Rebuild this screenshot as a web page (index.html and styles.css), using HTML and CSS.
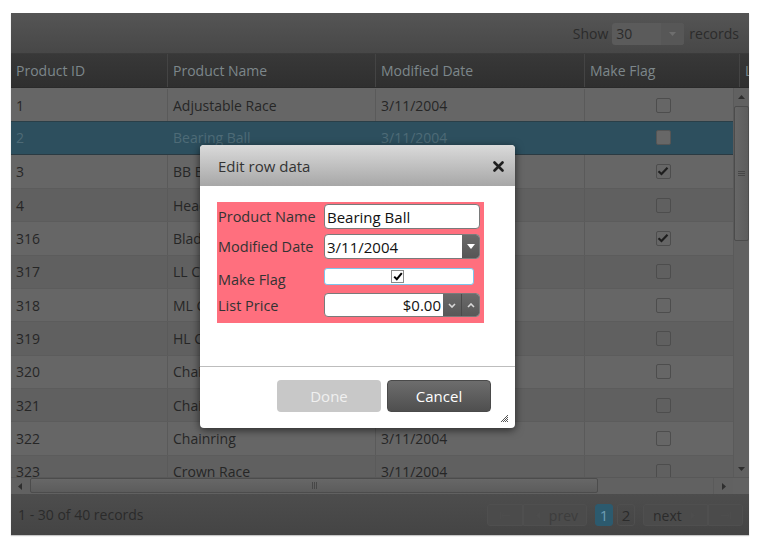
FILE: index.html
```html
<!DOCTYPE html>
<html>
<head>
<meta charset="utf-8">
<title>Grid edit</title>
<link rel="stylesheet" href="styles.css">
</head>
<body>
<div class="grid">
  <div class="toolbar">
    <span class="tb-text">Show</span>
    <span class="pagesize"><span class="ps-val">30</span><span class="ps-btn"><svg width="7" height="4" viewBox="0 0 7 4"><path d="M0 0H7L3.5 4Z" fill="#6e6e6e"/></svg></span></span>
    <span class="tb-text">records</span>
  </div>
  <div class="header">
    <div class="th">Product ID</div>
    <div class="th">Product Name</div>
    <div class="th">Modified Date</div>
    <div class="th">Make Flag</div>
    <div class="th">List Price</div>
  </div>
  <div class="content">
    <div class="rows">
      <div class="row"><div class="td">1</div><div class="td">Adjustable Race</div><div class="td">3/11/2004</div><div class="td cbc"><span class="chk"></span></div></div>
      <div class="row alt sel"><div class="td">2</div><div class="td">Bearing Ball</div><div class="td">3/11/2004</div><div class="td cbc"><span class="chk"></span></div></div>
      <div class="row"><div class="td">3</div><div class="td">BB Ball Bearing</div><div class="td">3/11/2004</div><div class="td cbc"><span class="chk on"><svg width="12" height="10" viewBox="0 0 12 10"><path d="M1.5 5.2L4.5 8L10.5 1.8" fill="none" stroke="#1e1e1e" stroke-width="2.2"/></svg></span></div></div>
      <div class="row alt"><div class="td">4</div><div class="td">Headset Ball Bearings</div><div class="td">3/11/2004</div><div class="td cbc"><span class="chk"></span></div></div>
      <div class="row"><div class="td">316</div><div class="td">Blade</div><div class="td">3/11/2004</div><div class="td cbc"><span class="chk on"><svg width="12" height="10" viewBox="0 0 12 10"><path d="M1.5 5.2L4.5 8L10.5 1.8" fill="none" stroke="#1e1e1e" stroke-width="2.2"/></svg></span></div></div>
      <div class="row alt"><div class="td">317</div><div class="td">LL Crankarm</div><div class="td">3/11/2004</div><div class="td cbc"><span class="chk"></span></div></div>
      <div class="row"><div class="td">318</div><div class="td">ML Crankarm</div><div class="td">3/11/2004</div><div class="td cbc"><span class="chk"></span></div></div>
      <div class="row alt"><div class="td">319</div><div class="td">HL Crankarm</div><div class="td">3/11/2004</div><div class="td cbc"><span class="chk"></span></div></div>
      <div class="row"><div class="td">320</div><div class="td">Chainring Bolts</div><div class="td">3/11/2004</div><div class="td cbc"><span class="chk"></span></div></div>
      <div class="row alt"><div class="td">321</div><div class="td">Chainring Nut</div><div class="td">3/11/2004</div><div class="td cbc"><span class="chk"></span></div></div>
      <div class="row"><div class="td">322</div><div class="td">Chainring</div><div class="td">3/11/2004</div><div class="td cbc"><span class="chk"></span></div></div>
      <div class="row alt"><div class="td">323</div><div class="td">Crown Race</div><div class="td">3/11/2004</div><div class="td cbc"><span class="chk"></span></div></div>
    </div>
    <div class="vscroll">
      <div class="arrow"><svg width="7" height="4" viewBox="0 0 7 4"><path d="M0 4H7L3.5 0Z" fill="#2e2e2e"/></svg></div>
      <div class="vthumb"><svg width="7" height="7" viewBox="0 0 7 7"><path d="M0 1.5H7M0 3.5H7M0 5.5H7" stroke="#474747" stroke-width="1"/></svg></div>
      <div class="vtrack"></div>
      <div class="arrow"><svg width="7" height="4" viewBox="0 0 7 4"><path d="M0 0H7L3.5 4Z" fill="#2e2e2e"/></svg></div>
    </div>
  </div>
  <div class="hscroll">
    <div class="harrow"><svg width="4" height="7" viewBox="0 0 4 7"><path d="M4 0V7L0 3.5Z" fill="#2e2e2e"/></svg></div>
    <div class="hthumb"><svg width="7" height="7" viewBox="0 0 7 7"><path d="M1.5 0V7M3.5 0V7M5.5 0V7" stroke="#474747" stroke-width="1"/></svg></div>
    <div class="htrack"></div>
    <div class="harrow right"><svg width="4" height="7" viewBox="0 0 4 7"><path d="M0 0V7L4 3.5Z" fill="#2e2e2e"/></svg></div>
    <div class="corner"></div>
  </div>
  <div class="footer">
    <span class="info">1 - 30 of 40 records</span>
    <div class="pager">
      <span class="pbtn first"><svg width="10" height="7" viewBox="0 0 10 7"><path d="M0.5 0V7M1.5 3.5H10M1.5 3.5L4.5 1M1.5 3.5L4.5 6" stroke="#4d4d4d" stroke-width="1" fill="none"/></svg></span>
      <span class="pbtn prev"><svg width="4" height="7" viewBox="0 0 4 7"><path d="M4 0V7L0 3.5Z" fill="#4d4d4d"/></svg><span>prev</span></span>
      <span class="page cur">1</span>
      <span class="page">2</span>
      <span class="pbtn next"><span>next</span><svg width="4" height="7" viewBox="0 0 4 7"><path d="M0 0V7L4 3.5Z" fill="#4d4d4d"/></svg></span>
      <span class="pbtn last"><svg width="10" height="7" viewBox="0 0 10 7"><path d="M9.5 0V7M0 3.5H8.5M8.5 3.5L5.5 1M8.5 3.5L5.5 6" stroke="#4d4d4d" stroke-width="1" fill="none"/></svg></span>
    </div>
  </div>
</div>

<div class="dialog">
  <div class="dlg-title">
    <span>Edit row data</span>
    <svg class="close" width="11" height="11" viewBox="0 0 11 11"><path d="M1.5 1.5L9.5 9.5M9.5 1.5L1.5 9.5" stroke="#1f1f1f" stroke-width="2.6" stroke-linecap="round"/></svg>
  </div>
  <div class="dlg-body">
    <div class="form">
      <div class="frow r1"><label>Product Name</label><div class="field input"><span>Bearing Ball</span></div></div>
      <div class="frow r2"><label>Modified Date</label><div class="field input combo"><span>3/11/2004</span><span class="dd"><svg width="8" height="5" viewBox="0 0 8 5"><path d="M0 0H8L4 5Z" fill="#fff"/></svg></span></div></div>
      <div class="frow r3"><label>Make Flag</label><div class="field flag"><span class="dchk"><svg width="10" height="9" viewBox="0 0 10 9"><path d="M1.2 4.6L3.8 7.2L8.8 1.2" fill="none" stroke="#000" stroke-width="2"/></svg></span></div></div>
      <div class="frow r4"><label>List Price</label><div class="field input num"><span class="numval">$0.00</span><span class="spin"><svg width="8" height="5" viewBox="0 0 8 5"><path d="M1 1L4 4L7 1" fill="none" stroke="#d8d8d8" stroke-width="1.6"/></svg></span><span class="spin"><svg width="8" height="5" viewBox="0 0 8 5"><path d="M1 4L4 1L7 4" fill="none" stroke="#d8d8d8" stroke-width="1.6"/></svg></span></div></div>
    </div>
  </div>
  <div class="dlg-foot">
    <span class="btn done">Done</span>
    <span class="btn cancel">Cancel</span>
  </div>
  <svg class="resize" width="7" height="7" viewBox="0 0 7 7"><path d="M7 0L0 7M7 2L2 7M7 4L4 7M7 6L6 7" stroke="#555" stroke-width="1"/></svg>
</div>
</body>
</html>
```

FILE: styles.css
```css
* { box-sizing: border-box; }

body {
  margin: 0;
  background: #fff;
  font-family: "Open Sans", "Noto Sans", sans-serif;
  font-size: 14px;
  color: #262626;
  position: relative;
  width: 761px;
  height: 549px;
  overflow: hidden;
}

.grid {
  margin: 13px 0 0 11px;
  width: 738px;
  height: 522px;
  display: flex;
  flex-direction: column;
  box-shadow: 0 1px 1px rgba(0, 0, 0, 0.22);
}

/* toolbar */
.toolbar {
  height: 41px;
  flex: none;
  background: linear-gradient(#555555, #474747);
  border-bottom: 1px solid #3b3b3b;
  display: flex;
  align-items: center;
  justify-content: flex-end;
  padding: 0 10px 0 0;
}
.tb-text { color: #2b2b2b; font-size: 14px; }
.pagesize {
  width: 72px;
  height: 22px;
  margin: 1px 5px 0 4px;
  display: flex;
  background: #5b5b5b;
  border-radius: 3px;
}
.ps-val {
  flex: 1;
  padding: 1px 0 0 4px;
  color: #2b2b2b;
  font-size: 14px;
}
.ps-btn {
  width: 23px;
  display: flex;
  align-items: center;
  justify-content: center;
  background: #575757;
  border-radius: 0 3px 3px 0;
}

/* header */
.header {
  height: 34px;
  flex: none;
  display: grid;
  grid-template-columns: 156px 208px 209px 155px 1fr;
  background: linear-gradient(#383838, #2f2f2f);
  border-bottom: 1px solid #2a2a2a;
}
.th {
  padding: 0 0 0 5px;
  display: flex;
  align-items: center;
  color: #7d878b;
  font-size: 14px;
  white-space: nowrap;
  overflow: hidden;
}
.th + .th { border-left: 1px solid #444444; }

/* body */
.content {
  height: 389px;
  flex: none;
  display: flex;
  background: #616161;
}
.rows {
  width: 722px;
  overflow: hidden;
}
.row {
  height: 33.333px;
  display: grid;
  grid-template-columns: 156px 208px 209px 155px;
  background: #666666;
  border-top: 1px solid #5c5c5c;
}
.row:first-child { border-top-color: #666666; }
.row.alt { background: #606060; }
.row.sel {
  background: #2d4f5e;
  border-top-color: #2a3f48;
  border-bottom: 1px solid #2a3a42;
  color: #4e6b77;
}
.row.sel + .row { border-top: none; }
.td {
  padding: 0 0 0 5px;
  display: flex;
  align-items: center;
  white-space: nowrap;
  overflow: hidden;
  font-size: 14px;
}
.td + .td { border-left: 1px solid #5a5a5a; }
.row.sel .td + .td { border-left-color: #2d4f5e; }
.cbc { justify-content: center; padding: 0; }
.chk {
  width: 15px;
  height: 15px;
  border: 1px solid #4d4d4d;
  border-radius: 2px;
  display: flex;
  align-items: center;
  justify-content: center;
  margin-left: 2px;
}
.row.sel .chk { background: #676767; border-color: #555; }

/* vertical scrollbar */
.vscroll {
  width: 16px;
  display: flex;
  flex-direction: column;
  background: #616161;
  border-left: 1px solid #5a5a5a;
}
.arrow {
  height: 17px;
  display: flex;
  align-items: center;
  justify-content: center;
}
.vthumb {
  height: 135px;
  margin: 1px 0 0 0;
  background: linear-gradient(90deg, #676767, #5c5c5c);
  border: 1px solid #4c4c4c;
  border-radius: 2px;
  display: flex;
  align-items: center;
  justify-content: center;
}
.vtrack { flex: 1; }

/* horizontal scrollbar */
.hscroll {
  height: 17px;
  flex: none;
  display: flex;
  background: #616161;
  border-top: 1px solid #585858;
}
.harrow {
  width: 18px;
  display: flex;
  align-items: center;
  justify-content: center;
}
.harrow.right { width: 20px; border-left: 1px solid #5a5a5a; }
.hthumb {
  width: 568px;
  margin: 0 0 1px 1px;
  background: linear-gradient(#676767, #5c5c5c);
  border: 1px solid #4c4c4c;
  border-radius: 2px;
  display: flex;
  align-items: center;
  justify-content: center;
}
.htrack { flex: 1; }
.corner { width: 16px; background: #626262; }

/* footer */
.footer {
  flex: 1;
  display: flex;
  align-items: center;
  justify-content: space-between;
  padding: 0 6px 0 7px;
  background: linear-gradient(#4d4d4d, #444444);
}
.info { color: #2b2b2b; font-size: 14px; }
.pager {
  display: flex;
  align-items: center;
  height: 22px;
  margin-top: 1px;
}
.pbtn {
  height: 22px;
  display: flex;
  align-items: center;
  justify-content: center;
  gap: 9px;
  background: #4b4b4b;
  border: 1px solid #4f4f4f;
  border-radius: 3px;
  color: #3d3d3d;
  font-size: 14px;
}
.first { width: 36px; border-radius: 3px 0 0 3px; }
.prev { width: 64px; border-radius: 0 3px 3px 0; margin-right: 8px; justify-content: flex-end; padding-right: 8px; }
.next { width: 65px; margin-left: 8px; border-radius: 3px 0 0 3px; color: #2b2b2b; justify-content: flex-start; padding-left: 9px; }
.last { width: 35px; border-radius: 0 3px 3px 0; }
.page {
  width: 18px;
  height: 22px;
  display: flex;
  align-items: center;
  justify-content: center;
  border-radius: 3px;
  font-size: 15px;
  color: #2b2b2b;
  border: 1px solid #4f4f4f;
}
.page + .page { margin-left: 4px; }
.page.cur { background: #2c5a6e; border-color: #2c5a6e; color: #6c9db2; }

/* dialog */
.dialog {
  position: absolute;
  left: 200px;
  top: 145px;
  width: 315px;
  height: 283px;
  background: #fff;
  border-radius: 4px;
  box-shadow: 0 2px 9px rgba(0, 0, 0, 0.6);
  display: flex;
  flex-direction: column;
}
.dlg-title {
  height: 41px;
  flex: none;
  background: linear-gradient(#dadada, #a7a7a7);
  border-radius: 4px 4px 0 0;
  display: flex;
  align-items: center;
  justify-content: space-between;
  padding: 0 11px 0 18px;
  font-size: 15px;
  color: #333;
}
.close { margin-top: 1px; }
.dlg-body {
  height: 180px;
  flex: none;
  padding: 16px 0 0 17px;
}
.form {
  width: 267px;
  height: 121px;
  background: #ff6f7e;
  padding: 2px 0 0 1px;
}
.frow {
  display: flex;
  align-items: center;
}
.frow label {
  width: 106px;
  color: #333;
  font-size: 14.5px;
  white-space: nowrap;
}
.r1 { height: 25px; }
.r2 { height: 25px; margin-top: 5px; }
.r3 { height: 17px; margin-top: 9px; }
.r4 { height: 24px; margin-top: 8px; }
.r3 label { margin-top: 5px; }
.field {
  height: 100%;
  background: #fff;
}
.input {
  width: 156px;
  border: 1px solid #7a7a7a;
  border-radius: 4px;
  display: flex;
  align-items: center;
  padding-left: 2px;
  font-size: 15px;
  color: #111;
  overflow: hidden;
}
.combo span:first-child { flex: 1; }
.dd {
  width: 17px;
  height: 100%;
  display: flex;
  align-items: center;
  justify-content: center;
  background: linear-gradient(#6a6a6a, #555);
}
.flag {
  width: 150px;
  border: 1px solid #7cc5ec;
  border-radius: 3px;
  display: flex;
  align-items: center;
  justify-content: center;
}
.dchk {
  width: 13px;
  height: 13px;
  border: 1px solid #8a8a8a;
  background: #fff;
  display: flex;
  align-items: center;
  justify-content: center;
  margin-left: -3px;
}
.num { padding-left: 0; }
.numval { flex: 1; text-align: right; padding-right: 2px; }
.spin {
  width: 18px;
  height: 100%;
  display: flex;
  align-items: center;
  justify-content: center;
  background: linear-gradient(#6a6a6a, #585858);
}
.spin + .spin { border-left: 1px solid #4a4a4a; }
.dlg-foot {
  flex: 1;
  border-top: 1px solid #bdbdbd;
  display: flex;
  justify-content: flex-end;
  gap: 6px;
  padding: 13px 24px 0 0;
}
.btn {
  width: 104px;
  height: 32px;
  display: flex;
  align-items: center;
  justify-content: center;
  border-radius: 4px;
  font-size: 15px;
}
.done { background: #c8c8c8; color: #f0f0f0; }
.cancel {
  background: linear-gradient(#6d6d6d, #4f4f4f);
  border: 1px solid #4a4a4a;
  color: #fff;
}
.resize { position: absolute; right: 7px; bottom: 6px; }
```
